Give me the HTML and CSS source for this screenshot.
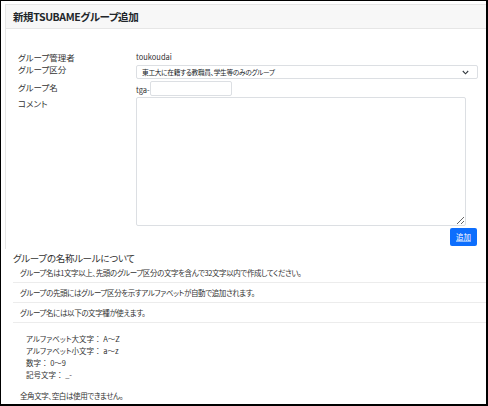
FILE: index.html
```html
<!DOCTYPE html>
<html lang="ja">
<head>
<meta charset="utf-8">
<title>新規TSUBAMEグループ追加</title>
<link rel="stylesheet" href="styles.css">
</head>
<body>
<div class="frame">
  <div class="card">
    <div class="card-header">新規TSUBAMEグループ追加</div>
    <div class="card-body">
      <div class="row row-admin">
        <div class="label">グループ管理者</div>
        <div class="value">toukoudai</div>
      </div>
      <div class="row row-select">
        <div class="label">グループ区分</div>
        <div class="value">
          <div class="select">
            <span>東工大に在籍する教職員、学生等のみのグループ</span>
            <svg class="chev" width="7" height="5" viewBox="0 0 7 5"><path d="M0.8 1 L3.5 3.8 L6.2 1" fill="none" stroke="#343a40" stroke-width="1.1"/></svg>
          </div>
        </div>
      </div>
      <div class="row row-name">
        <div class="label">グループ名</div>
        <div class="value name-value">
          <span class="prefix">tga-</span>
          <div class="input"></div>
        </div>
      </div>
      <div class="row row-comment">
        <div class="label">コメント</div>
        <div class="value">
          <textarea class="textarea"></textarea>
        </div>
      </div>
      <div class="actions">
        <span class="btn">追加</span>
      </div>
    </div>
  </div>
  <div class="rules">
    <div class="rules-title">グループの名称ルールについて</div>
    <ul class="list">
      <li class="item">グループ名は1文字以上、先頭のグループ区分の文字を含んで32文字以内で作成してください。</li>
      <li class="item">グループの先頭にはグループ区分を示すアルファベットが自動で追加されます。</li>
      <li class="item">グループ名には以下の文字種が使えます。</li>
      <li class="item last">
        <div class="chars">
          <div>アルファベット大文字<span class="colon">：</span> A～Z</div>
          <div>アルファベット小文字<span class="colon">：</span> a～z</div>
          <div>数字<span class="colon">：</span> 0～9</div>
          <div>記号文字<span class="colon">：</span> _-</div>
        </div>
        <div class="note">全角文字、空白は使用できません。</div>
      </li>
    </ul>
  </div>
</div>
</body>
</html>
```
FILE: styles.css
```css
html, body {
  margin: 0;
  padding: 0;
  background: #ffffff;
}
body {
  font-family: "Noto Sans CJK JP", "Noto Sans", sans-serif;
  font-feature-settings: "palt";
  color: #333333;
}
.frame {
  width: 488px;
  height: 406px;
  box-sizing: border-box;
  border-top: 1px solid #000;
  border-left: 1px solid #000;
  border-right: 2px solid #000;
  border-bottom: 2px solid #000;
  padding: 3px 0 0 4px;
  overflow: hidden;
}
.card {
  border-left: 1px solid #e6e6e6;
}
.card-header {
  height: 25px;
  box-sizing: border-box;
  background: #f7f7f7;
  border-top: 1px solid #e6e6e6;
  border-bottom: 1px solid #e6e6e6;
  padding-left: 7px;
  font-size: 10.5px;
  letter-spacing: -0.4px;
  font-weight: bold;
  line-height: 23px;
  color: #212529;
}
.card-body {
  padding: 22px 8px 3px 12px;
}
.row {
  display: flex;
  align-items: flex-start;
}
.label {
  width: 118px;
  flex: none;
  font-size: 8.5px;
  line-height: 12px;
  color: #333;
}
.value {
  flex: 1;
  font-size: 7.5px;
  line-height: 12px;
  color: #333;
}
.row-admin {
  height: 13px;
}
.row-select {
  margin-top: 1px;
}
.row-select .label {
  margin-top: -2px;
}
.select {
  height: 14px;
  box-sizing: border-box;
  border: 1px solid #dcdfe3;
  border-radius: 2px;
  display: flex;
  align-items: center;
  justify-content: space-between;
  padding: 0 8px 0 5px;
  font-size: 6.7px;
  letter-spacing: -0.3px;
  line-height: 12px;
  color: #212529;
}
.chev {
  display: block;
}
.row-name {
  margin-top: 2px;
}
.name-value {
  display: flex;
  align-items: flex-end;
}
.prefix {
  font-size: 7.5px;
  line-height: 12px;
}
.input {
  width: 82px;
  height: 15px;
  box-sizing: border-box;
  border: 1px solid #dcdfe3;
  border-radius: 2px;
}
.row-comment {
  margin-top: 1px;
}
.textarea {
  display: block;
  width: 330px;
  height: 129px;
  box-sizing: border-box;
  border: 1px solid #dcdfe3;
  border-radius: 2px;
  margin: 0;
  padding: 0;
  resize: both;
  font-size: 8px;
}
.actions {
  display: flex;
  justify-content: flex-end;
  margin-top: 2px;
  padding-right: 1px;
}
.btn {
  display: inline-block;
  width: 27px;
  height: 18px;
  box-sizing: border-box;
  background: #0d6efd;
  border-radius: 2px;
  color: #ffffff;
  font-size: 7.5px;
  line-height: 18px;
  text-align: center;
  text-decoration: underline;
  text-decoration-color: rgba(255,255,255,0.5);
}
.rules {
  padding-left: 8px;
}
.rules-title {
  margin-top: 2px;
  font-size: 9.5px;
  letter-spacing: -0.3px;
  line-height: 14px;
  color: #333;
}
.list {
  list-style: none;
  margin: -2px 0 0 0;
  padding: 0;
}
.item {
  border-bottom: 1px solid #ececec;
  padding: 4px 7px 4px 7px;
  font-size: 7.5px;
  letter-spacing: -0.4px;
  line-height: 11px;
  color: #333;
}
.item.last {
  border-bottom: none;
  padding-top: 10px;
}
.chars {
  padding-left: 6px;
  letter-spacing: 0;
}
.chars div {
  line-height: 12px;
}
.colon {
  font-feature-settings: normal;
}
.note {
  margin-top: 9px;
  line-height: 12px;
}
```
